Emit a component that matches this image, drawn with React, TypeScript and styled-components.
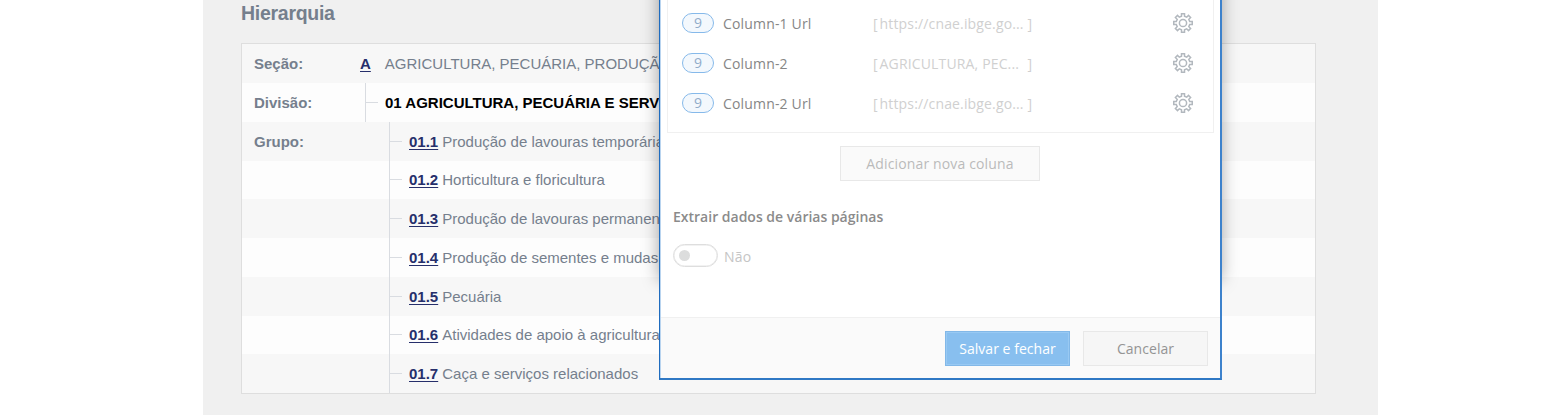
import React from 'react';
import styled, { createGlobalStyle } from 'styled-components';

const GlobalStyle = createGlobalStyle`
  *, *::before, *::after { box-sizing: border-box; }
  body {
    margin: 0;
    background: #fff;
    overflow: hidden;
    font-family: 'Liberation Sans', Arial, sans-serif;
  }
`;

const Page = styled.div`
  position: relative;
  height: 415px;
  overflow: hidden;
`;

const Content = styled.main`
  width: 1175px;
  height: 415px;
  margin-left: 203px;
  padding: 0 62px 0 38px;
  background: #f0f0f0;
`;

const Title = styled.h2`
  margin: 0;
  height: 43px;
  padding-top: 1px;
  font-size: 19.5px;
  letter-spacing: -0.28px;
  line-height: 25px;
  font-weight: 700;
  color: #757f8d;
`;

const Table = styled.section`
  border: 1px solid #dedede;
`;

const TableRow = styled.div<{ $even?: boolean; $h?: number }>`
  display: flex;
  height: ${(p) => p.$h ?? 39}px;
  background: ${(p) => (p.$even ? '#fdfdfd' : '#f7f7f7')};
  font-size: 15px;
  line-height: ${(p) => (p.$h === 38 ? 37 : 39)}px;
  color: #757f8d;
  white-space: nowrap;
`;

const RowLabel = styled.div<{ $width: number }>`
  flex: none;
  width: ${(p) => p.$width}px;
  padding-left: 12px;
  font-weight: 700;
`;

const Branch = styled.div`
  display: flex;
  border-left: 1px solid #d9dce1;
`;

const Tick = styled.span<{ $short?: boolean }>`
  width: 12px;
  height: 1px;
  margin: ${(p) => (p.$short ? 18 : 19)}px 7px 0 0;
  background: #d9dce1;
`;

const Code = styled.a`
  font-weight: 700;
  color: #262f6b;
  text-decoration: underline;
  text-underline-offset: 2px;
  text-decoration-thickness: 1px;
`;

const Description = styled.span<{ $gap?: number }>`
  margin-left: ${(p) => p.$gap ?? 4}px;
`;

const Current = styled.strong`
  color: #000;
`;

const DialogShadow = styled.div`
  position: absolute;
  left: 659px;
  top: -40px;
  width: 562px;
  height: 320px;
  box-shadow: 0 0 16px rgba(0, 0, 0, 0.36);
`;

const Dialog = styled.div`
  position: absolute;
  left: 659px;
  top: 0;
  width: 563px;
  height: 380px;
  display: flex;
  flex-direction: column;
  border: 2px solid #3d82cc;
  border-left: 1px solid #1f6cbf;
  border-top: 0;
  border-bottom-color: #2f78c4;
  background: #fff;
  box-shadow: inset 1px 0 #b9d4ef;
  font-family: 'Open Sans', 'Noto Sans', sans-serif;
  font-size: 14px;
`;

const DialogBody = styled.div`
  height: 317px;
  padding: 0 6px 0 7px;
`;

const ColumnList = styled.div`
  height: 133px;
  padding: 3px 20px 0 14px;
  border: 1px solid #f0f0f0;
  border-top: 0;
`;

const ColumnItem = styled.div`
  display: flex;
  align-items: center;
  height: 40px;
  white-space: nowrap;
`;

const Count = styled.span`
  width: 32px;
  height: 20px;
  border: 1px solid #86b9ea;
  border-radius: 10px;
  background: #f3f8fd;
  color: #91acca;
  line-height: 18px;
  text-align: center;
`;

const ColumnName = styled.span`
  width: 150px;
  margin-left: 9px;
  color: #868686;
  letter-spacing: 0.17px;
`;

const Preview = styled.span`
  display: flex;
  width: 159px;
  color: #d0d0d0;
`;

const PreviewText = styled.span`
  flex: 1;
  margin-left: 2px;
  letter-spacing: 0.15px;
`;

const GearIcon = styled.svg`
  width: 20px;
  height: 20px;
  margin-left: auto;
  fill: none;
  stroke: #b2b8be;
  stroke-width: 1.5;
`;

const Button = styled.button<{ $variant: 'add' | 'primary' | 'plain' }>`
  width: ${(p) => (p.$variant === 'add' ? 200 : 125)}px;
  height: 35px;
  padding: 0;
  font: inherit;
  letter-spacing: ${(p) => (p.$variant === 'add' ? 0.14 : 0.04)}px;
  border: 1px solid ${(p) => (p.$variant === 'primary' ? '#82b8e8' : '#e8e8e8')};
  background: ${(p) => ({ add: '#fafafa', primary: '#88bfef', plain: '#f6f6f6' })[p.$variant]};
  color: ${(p) => ({ add: '#bababa', primary: '#fff', plain: '#949494' })[p.$variant]};
  box-shadow: ${(p) => (p.$variant === 'primary' ? 'inset 0 0 0 1px #98c9f3' : 'none')};
`;

const AddRow = styled.div`
  display: flex;
  justify-content: center;
  padding: 13px 1px 0 0;
`;

const Heading = styled.h3`
  margin: 25px 0 0 6px;
  font-size: 14px;
  line-height: 21px;
  font-weight: 600;
  color: #8b8b8b;
`;

const ToggleRow = styled.div`
  display: flex;
  align-items: center;
  height: 24px;
  margin: 16px 0 0 6px;
  color: #c5c5c5;
  letter-spacing: 0.2px;
`;

const Toggle = styled.span`
  display: flex;
  align-items: center;
  width: 45px;
  height: 23px;
  margin-right: 6px;
  padding-left: 5px;
  border: 1px solid #dedede;
  border-radius: 12px;
  box-shadow: inset 0 0 0 0.5px #e6e6e6;
`;

const Knob = styled.span`
  width: 11px;
  height: 11px;
  border-radius: 50%;
  background: #dcdddd;
`;

const ToggleLabel = styled.span`
  padding-top: 2px;
`;

const Footer = styled.footer`
  display: flex;
  justify-content: flex-end;
  gap: 13px;
  flex: 1;
  padding: 13px 12px 0 0;
  margin-left: 1px;
  border-top: 1px solid #f0f0f0;
  background: #fafafa;
`;

const groups = [
  { code: '01.1', text: 'Produção de lavouras temporária', h: 39 },
  { code: '01.2', text: 'Horticultura e floricultura', h: 38 },
  { code: '01.3', text: 'Produção de lavouras permanen', h: 39 },
  { code: '01.4', text: 'Produção de sementes e mudas', h: 39 },
  { code: '01.5', text: 'Pecuária', h: 39 },
  { code: '01.6', text: 'Atividades de apoio à agricultura', h: 38 },
  { code: '01.7', text: 'Caça e serviços relacionados', h: 39 },
];

const columns = [
  { name: 'Column-1 Url', value: 'https://cnae.ibge.go...' },
  { name: 'Column-2', value: 'AGRICULTURA, PEC...' },
  { name: 'Column-2 Url', value: 'https://cnae.ibge.go...' },
];

// Outline of a cog with eight square teeth around (10, 10).
const gearPath = (() => {
  const points: string[] = [];
  for (let i = 0; i < 8; i++) {
    const base = (i * Math.PI) / 4;
    const corners: [number, number][] = [
      [-1.5, 6.7],
      [-1.5, 9.25],
      [1.5, 9.25],
      [1.5, 6.7],
    ];
    corners.forEach(([x, y]) => {
      const px = 10 + x * Math.cos(base) + y * Math.sin(base);
      const py = 10 + x * Math.sin(base) - y * Math.cos(base);
      points.push(`${px.toFixed(2)} ${py.toFixed(2)}`);
    });
  }
  return `M${points.join('L')}Z`;
})();

const Gear = () => (
  <GearIcon viewBox="0 0 20 20">
    <path d={gearPath} />
    <circle cx="10" cy="10" r="3.6" />
  </GearIcon>
);

export default function App() {
  return (
    <Page>
      <GlobalStyle />
      <Content>
        <Title>Hierarquia</Title>
        <Table>
          <TableRow>
            <RowLabel $width={118}>Seção:</RowLabel>
            <Code>A</Code>
            <Description $gap={14}>AGRICULTURA, PECUÁRIA, PRODUÇÃ</Description>
          </TableRow>
          <TableRow $even>
            <RowLabel $width={123}>Divisão:</RowLabel>
            <Branch>
              <Tick />
              <Current>01 AGRICULTURA, PECUÁRIA E SERV</Current>
            </Branch>
          </TableRow>
          {groups.map((g, i) => (
            <TableRow key={g.code} $even={i % 2 === 1} $h={g.h}>
              <RowLabel $width={147}>{i === 0 ? 'Grupo:' : ''}</RowLabel>
              <Branch>
                <Tick $short={g.h === 38} />
                <Code>{g.code}</Code>
                <Description>{g.text}</Description>
              </Branch>
            </TableRow>
          ))}
        </Table>
      </Content>
      <DialogShadow />
      <Dialog>
        <DialogBody>
          <ColumnList>
            {columns.map((c) => (
              <ColumnItem key={c.name}>
                <Count>9</Count>
                <ColumnName>{c.name}</ColumnName>
                <Preview>
                  [<PreviewText>{c.value}</PreviewText>]
                </Preview>
                <Gear />
              </ColumnItem>
            ))}
          </ColumnList>
          <AddRow>
            <Button $variant="add">Adicionar nova coluna</Button>
          </AddRow>
          <Heading>Extrair dados de várias páginas</Heading>
          <ToggleRow>
            <Toggle><Knob /></Toggle>
            <ToggleLabel>Não</ToggleLabel>
          </ToggleRow>
        </DialogBody>
        <Footer>
          <Button $variant="primary">Salvar e fechar</Button>
          <Button $variant="plain">Cancelar</Button>
        </Footer>
      </Dialog>
    </Page>
  );
}
